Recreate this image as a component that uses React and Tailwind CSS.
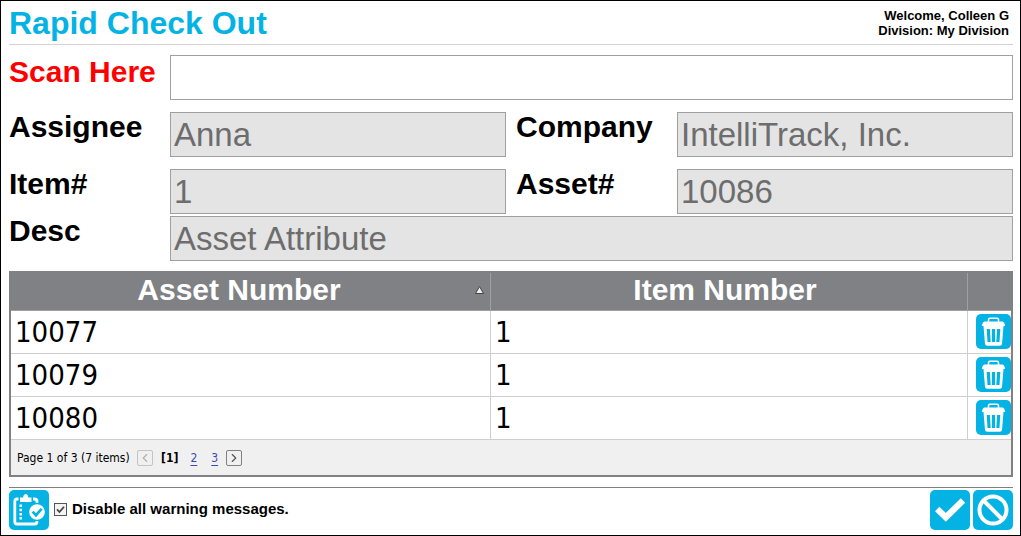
import { useState } from "react";
import { ChevronLeft, ChevronRight } from "lucide-react";

const assets = [
  { asset: "10077", item: "1" },
  { asset: "10079", item: "1" },
  { asset: "10080", item: "1" },
];

function TrashIcon() {
  return (
    <svg viewBox="0 0 35 35" className="block size-[35px]" aria-hidden="true">
      <rect width="35" height="35" rx="5" fill="#04b3e4" />
      <path d="M12.500 8V5.500q0-1.200 1.500-1.200h7q1.500 0 1.500 1.200V8" fill="none" stroke="#fff" strokeWidth="1.500" />
      <path d="M8.500 7.500h18q2.200.5 2.600 4.500H5.900q.4-4 2.600-4.500Z" fill="#fff" />
      <path d="M7.500 12h20L26 30q-.2 1.800-2.200 1.800H11.200q-2 0-2.200-1.800Z" fill="#fff" />
      <path d="m12.300 15 .8 13M17.500 15v13M22.700 15l-.8 13" fill="none" stroke="#04b3e4" strokeWidth="3.200" />
    </svg>
  );
}

function ClipboardIcon() {
  return (
    <svg viewBox="0 0 40 40" className="block size-10" aria-hidden="true">
      <rect width="40" height="40" rx="5" fill="#04b3e4" />
      <path d="M9.500 9H8Q5.800 9 5.800 11.200v20.600Q5.800 34 8 34h17.500q2.500 0 2.500-2.200V31M24 9h1.500Q28 9 28 11.200v1.500" fill="none" stroke="#fff" strokeWidth="2.800" />
      <path d="M11 7.500h3.200q.2-3.500 2.500-3.500t2.500 3.500H22.500V12H11Z" fill="#fff" />
      <path d="M10.500 14.500H13V17h-2.500zM10.500 18.700H13v2.500h-2.500zM10.500 22.900H13v2.500h-2.500zM10.500 27.100H13v2.500h-2.500z" fill="#fff" />
      <circle cx="28" cy="22" r="7.800" fill="#fff" />
      <path d="m23.600 21.600 3.400 3.600 5.600-6.400" fill="none" stroke="#04b3e4" strokeWidth="2.600" />
    </svg>
  );
}

function ConfirmIcon() {
  return (
    <svg viewBox="0 0 40 40" className="block size-10" aria-hidden="true">
      <rect width="40" height="40" rx="5" fill="#04b3e4" />
      <path d="m7.200 19 8.600 8.300L33 10.500" fill="none" stroke="#fff" strokeWidth="6.300" />
    </svg>
  );
}

function CancelIcon() {
  return (
    <svg viewBox="0 0 40 40" className="block size-10" aria-hidden="true">
      <rect width="40" height="40" rx="5" fill="#04b3e4" />
      <circle cx="20" cy="20" r="13.500" fill="none" stroke="#fff" strokeWidth="4" />
      <path d="m11 11 18 18" stroke="#fff" strokeWidth="4" />
    </svg>
  );
}

function Field({ id, label, value }) {
  return (
    <div className="flex min-w-0 items-start">
      <label htmlFor={id} className="w-[161px] shrink-0 text-[30px] leading-[30px] font-bold">
        {label}
      </label>
      <input
        id={id}
        type="text"
        value={value}
        disabled
        className="h-[45px] w-full min-w-0 border border-[#a0a0a0] bg-[#e4e4e4] px-[3px] text-[33px] text-[#6d6d6d]"
      />
    </div>
  );
}

export default function App() {
  const [scan, setScan] = useState("");
  const [disableWarnings, setDisableWarnings] = useState(true);

  return (
    <div className="border border-black bg-white pr-[7px] pb-[5px] pl-2 font-['Liberation_Sans',Arial,sans-serif] text-black">
      <header className="flex h-11 items-center justify-between border-b border-[#d3d3d3] pr-1">
        <h1 className="text-[32px] leading-10 font-bold text-[#04b3e4]">Rapid Check Out</h1>
        <div className="text-right text-[13px] leading-[15px] font-bold">
          <p>Welcome, Colleen G</p>
          <p>Division: My Division</p>
        </div>
      </header>

      <main>
        <div className="mt-[10px] flex items-start">
          <label htmlFor="scan" className="w-[161px] shrink-0 text-[30px] leading-[34px] font-bold text-[#ff0000]">
            Scan Here
          </label>
          <input
            id="scan"
            type="text"
            value={scan}
            onChange={(e) => setScan(e.target.value)}
            className="h-[45px] w-full min-w-0 border border-[#a0a0a0] bg-white px-[3px] text-[33px] outline-none"
          />
        </div>

        <div className="mt-3 grid grid-cols-2 gap-x-[10px] gap-y-3">
          <Field id="assignee" label="Assignee" value="Anna" />
          <Field id="company" label="Company" value="IntelliTrack, Inc." />
          <Field id="item" label="Item#" value="1" />
          <Field id="asset" label="Asset#" value="10086" />
        </div>
        <div className="mt-[2px]">
          <Field id="desc" label="Desc" value="Asset Attribute" />
        </div>

        <div className="mt-[10px] border-2 border-[#808184] font-['DejaVu_Sans_Condensed','DejaVu_Sans',sans-serif]">
          <table className="w-full table-fixed border-separate border-spacing-0">
            <thead className="bg-[#808184] font-['Liberation_Sans',Arial,sans-serif] text-[30px] leading-8 text-white">
              <tr>
                <th className="h-[38px] w-[48%] border-r border-b border-[#a0a0a0] p-0 pb-1 align-middle">
                  <div className="flex items-center pr-[6px]">
                    <span className="flex-1 pr-2 text-center">Asset Number</span>
                    <svg viewBox="0 0 9 8" className="h-2 w-[9px]" aria-hidden="true">
                      <path d="M4.500.5 8.500 7.500h-8Z" fill="#eee" stroke="#444" />
                    </svg>
                  </div>
                </th>
                <th className="border-r border-b border-[#a0a0a0] p-0 pr-2 pb-1 align-middle">Item Number</th>
                <th className="w-[43px] border-b border-[#a0a0a0] p-0" aria-label="Delete" />
              </tr>
            </thead>
            <tbody className="text-[29px] leading-[42px]">
              {assets.map((row) => (
                <tr key={row.asset}>
                  <td className="h-[43px] border-r border-b border-[#cfcfcf] p-0 pl-1">{row.asset}</td>
                  <td className="border-r border-b border-[#cfcfcf] p-0 pl-1">{row.item}</td>
                  <td className="border-b border-[#cfcfcf] p-0 pt-[3px] pl-2 align-top">
                    <button type="button" aria-label={`Delete ${row.asset}`} className="block">
                      <TrashIcon />
                    </button>
                  </td>
                </tr>
              ))}
            </tbody>
          </table>

          <nav className="flex h-[35px] items-center bg-[#f0f0f0] pl-[6px] text-[12px]">
            <span className="w-[120px] whitespace-nowrap">Page 1 of 3 (7 items)</span>
            <button
              type="button"
              disabled
              aria-label="Previous page"
              className="flex size-4 items-center justify-center rounded-xs border border-[#c4c4c4] text-[#b0b0b0]"
            >
              <ChevronLeft size={14} />
            </button>
            <b className="ml-2">[1]</b>
            <a href="#page-2" className="ml-3 text-[#3a4db0] underline underline-offset-3">2</a>
            <a href="#page-3" className="ml-[14px] text-[#3a4db0] underline underline-offset-3">3</a>
            <button
              type="button"
              aria-label="Next page"
              className="ml-2 flex size-4 items-center justify-center rounded-xs border border-[#808080] text-[#555]"
            >
              <ChevronRight size={14} />
            </button>
          </nav>
        </div>
      </main>

      <footer className="mt-[10px] flex items-center border-t border-[#808080] pt-[2px]">
        <button type="button" aria-label="Checklist">
          <ClipboardIcon />
        </button>
        <label className="ml-[5px] flex items-center gap-[5px] pb-[2px] text-[15px] leading-5 font-bold">
          <span className="grid size-[13px]">
            <input
              type="checkbox"
              checked={disableWarnings}
              onChange={(e) => setDisableWarnings(e.target.checked)}
              className="peer col-start-1 row-start-1 size-[13px] appearance-none border border-[#555] bg-[#f3f3f3]"
            />
            <svg
              viewBox="0 0 13 13"
              className="pointer-events-none invisible col-start-1 row-start-1 size-[13px] peer-checked:visible"
              aria-hidden="true"
            >
              <path d="m3 6.300 2.500 2.700L10 3.800" fill="none" stroke="#444" strokeWidth="1.700" />
            </svg>
          </span>
          Disable all warning messages.
        </label>
        <div className="ml-auto flex gap-[3px]">
          <button type="button" aria-label="Confirm">
            <ConfirmIcon />
          </button>
          <button type="button" aria-label="Cancel">
            <CancelIcon />
          </button>
        </div>
      </footer>
    </div>
  );
}
